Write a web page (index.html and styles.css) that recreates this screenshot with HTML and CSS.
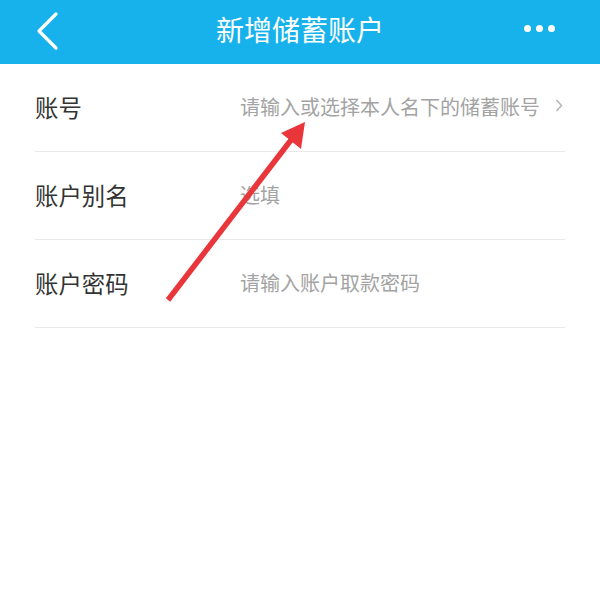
FILE: index.html
```html
<!DOCTYPE html>
<html lang="zh-CN">
<head>
<meta charset="utf-8">
<link rel="stylesheet" href="styles.css">
</head>
<body>
<div class="page">
  <header class="topbar">
    <div class="side left">
      <svg class="back" width="24" height="40" viewBox="0 0 24 40">
        <polyline points="20,3 3,20 20,37" fill="none" stroke="#fff" stroke-width="3.2" stroke-linecap="round" stroke-linejoin="round"/>
      </svg>
    </div>
    <div class="title">新增储蓄账户</div>
    <div class="side right">
      <span class="dot"></span><span class="dot"></span><span class="dot"></span>
    </div>
  </header>
  <main class="form">
    <div class="row">
      <div class="label">账号</div>
      <div class="value">请输入或选择本人名下的储蓄账号</div>
      <svg class="chev" width="8" height="13" viewBox="0 0 8 13">
        <polyline points="1.5,1 6.5,6.5 1.5,12" fill="none" stroke="#b5b5b5" stroke-width="1.5"/>
      </svg>
    </div>
    <div class="row">
      <div class="label">账户别名</div>
      <div class="value">选填</div>
    </div>
    <div class="row">
      <div class="label">账户密码</div>
      <div class="value">请输入账户取款密码</div>
    </div>
  </main>
  <svg class="annot" width="600" height="594" viewBox="0 0 600 594">
    <line x1="168" y1="300" x2="291" y2="140" stroke="#e8363b" stroke-width="5.5"/>
    <polygon points="305,122 281,133 301,149" fill="#e8363b"/>
  </svg>
</div>
</body>
</html>
```
FILE: styles.css
```css
html, body {
  margin: 0;
  padding: 0;
  background: #fff;
}
body {
  font-family: "Noto Sans CJK SC", "Noto Sans", sans-serif;
}
.page {
  position: relative;
  width: 600px;
  height: 594px;
  overflow: hidden;
}
.topbar {
  height: 64px;
  background: #17b2ec;
  display: grid;
  grid-template-columns: 150px 1fr 150px;
  align-items: center;
}
.side {
  display: flex;
  align-items: center;
  height: 100%;
}
.side.left {
  padding-left: 36px;
}
.back {
  display: block;
  margin-top: -2px;
}
.side.right {
  justify-content: flex-end;
  padding-right: 45px;
  gap: 5px;
  margin-top: -7px;
}
.dot {
  width: 7px;
  height: 7px;
  border-radius: 50%;
  background: #fff;
}
.title {
  text-align: center;
  color: #fff;
  font-size: 28px;
  line-height: 1;
  margin-top: -6px;
}
.form {
  margin: 0 35px;
}
.row {
  height: 87px;
  border-bottom: 1px solid #e8e8e8;
  display: flex;
  align-items: center;
}
.label {
  width: 205px;
  flex-shrink: 0;
  font-size: 23.4px;
  color: #333;
  margin-top: -2px;
}
.value {
  flex: 1;
  font-size: 20px;
  color: #a3a3a3;
  margin-top: -2px;
}
.chev {
  display: block;
  margin-right: 2px;
  margin-top: -4px;
}
.annot {
  position: absolute;
  left: 0;
  top: 0;
  pointer-events: none;
}
```
